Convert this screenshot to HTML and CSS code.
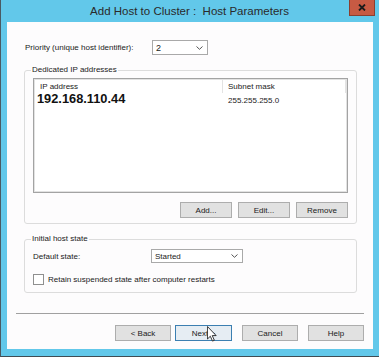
FILE: index.html
```html
<!DOCTYPE html>
<html lang="en">
<head>
    <meta charset="UTF-8">
    <title>Add Host to Cluster : Host Parameters</title>
    <link rel="stylesheet" href="styles.css">
</head>
<body>
    <div class="window">
        <div class="titlebar">
            <span class="title">Add Host to Cluster :&nbsp; Host Parameters</span>
            <button class="close" type="button" aria-label="Close">
                <svg width="8" height="7" viewBox="0 0 8 7"><path d="M1 0.5 L7 6.5 M7 0.5 L1 6.5" stroke="#1b1b1b" stroke-width="1.8" fill="none"/></svg>
            </button>
        </div>

        <div class="client">
            <div class="field-row priority-row">
                <label class="field-label priority-label">Priority (unique host identifier):</label>
                <div class="combo combo-priority">
                    <span>2</span>
                    <svg class="chevron" width="7" height="4" viewBox="0 0 7 4"><path d="M0.5 0.5 L3.5 3.3 L6.5 0.5" stroke="#555" stroke-width="1" fill="none"/></svg>
                </div>
            </div>

            <fieldset class="group group-ips">
                <legend>Dedicated IP addresses</legend>
                <div class="listview">
                    <div class="lv-header">
                        <div class="col col-ip">IP address</div>
                        <div class="col col-mask">Subnet mask</div>
                    </div>
                    <div class="lv-row">
                        <div class="col col-ip ip-value">192.168.110.44</div>
                        <div class="col col-mask">255.255.255.0</div>
                    </div>
                </div>
                <div class="button-row">
                    <button class="btn btn-small" type="button">Add...</button>
                    <button class="btn btn-small" type="button">Edit...</button>
                    <button class="btn btn-small" type="button">Remove</button>
                </div>
            </fieldset>

            <fieldset class="group group-state">
                <legend>Initial host state</legend>
                <div class="field-row state-row">
                    <label class="field-label state-label">Default state:</label>
                    <div class="combo combo-state">
                        <span>Started</span>
                        <svg class="chevron" width="7" height="4" viewBox="0 0 7 4"><path d="M0.5 0.5 L3.5 3.3 L6.5 0.5" stroke="#555" stroke-width="1" fill="none"/></svg>
                    </div>
                </div>
                <label class="check">
                    <span class="check-box"></span>
                    Retain suspended state after computer restarts
                </label>
            </fieldset>

            <hr class="separator">

            <div class="wizard-buttons">
                <button class="btn btn-wizard btn-back" type="button">&lt; Back</button>
                <button class="btn btn-wizard btn-next" type="button">Next &gt;
                    <svg class="cursor" width="10" height="16" viewBox="0 0 12 19"><path d="M0.5 0.5 L0.5 15.5 L4 12.2 L6.6 18 L8.8 17 L6.3 11.4 L11 11.4 Z" fill="#fff" stroke="#111" stroke-width="1"/></svg>
                </button>
                <button class="btn btn-wizard btn-cancel" type="button">Cancel</button>
                <button class="btn btn-wizard btn-help" type="button">Help</button>
            </div>
        </div>
    </div>
</body>
</html>
```

FILE: styles.css
```css
body { margin: 0; font-family: "Liberation Sans", Arial, sans-serif; font-size: 8px; color: #1a1a1a; }
.window { width: 379px; height: 357px; box-sizing: border-box; background: #62c8ea; border-left: 1px solid #4a5a63; border-bottom: 1px solid #3f4c54; display: flex; flex-direction: column; }

/* title bar */
.titlebar { height: 22px; display: grid; grid-template-columns: 1fr auto 1fr; align-items: start; }
.title { grid-column: 2; font-size: 11.5px; line-height: 22px; color: #2a2a2a; white-space: nowrap; margin-left: -1px; }
.close { grid-column: 3; justify-self: end; margin-right: 4px; width: 26px; height: 16px; padding: 0; border: 1px solid #8a3f30; border-top: none; background: #c75a43; display: flex; align-items: center; justify-content: center; }

/* client area */
.client { flex: 1; margin: 0 6px 7px 6px; background: #fdfcfd; display: flex; flex-direction: column; }
.field-row { display: flex; align-items: center; }
.priority-row { margin-top: 18px; padding-left: 18px; height: 15px; }
.priority-label { width: 127px; }
.state-label { width: 118px; }

.combo { box-sizing: border-box; border: 1px solid #a9a9a9; background: #fff; display: flex; align-items: center; justify-content: space-between; padding: 0 4px 0 3px; }
.combo-priority { width: 56px; height: 15px; font-size: 9px; }
.combo-state { width: 92px; height: 14px; }

/* group boxes */
.group { margin: 10px 16px 0 17px; padding: 3px 8px 5px 8px; border: 1px solid #dcdcdc; border-radius: 3px; min-width: 0; }
.group legend { padding: 0 1px; margin-left: -2px; line-height: 10px; }
.group-state { padding: 5px 8px 7px 8px; }

.listview { height: 115px; box-sizing: border-box; border: 1px solid #a3a3a3; box-shadow: inset 0 0 0 1px #e2e2e2; background: #fff; padding: 1px; }
.lv-header { display: flex; height: 13px; align-items: center; }
.lv-header .col-ip { border-right: 1px solid #e3e3e3; }
.lv-header .col-mask { border-right: 1px solid #e3e3e3; }
.col { height: 100%; display: flex; align-items: center; box-sizing: border-box; }
.col-ip { width: 188px; padding-left: 5px; }
.col-mask { flex: 1; padding-left: 5px; }
.lv-row { display: flex; align-items: baseline; height: 13px; }
.lv-row .col { display: block; height: auto; }
.ip-value { font-size: 12.8px; font-weight: bold; color: #111; line-height: 12px; padding-left: 2px; }

.button-row { display: flex; justify-content: flex-end; gap: 6px; margin-top: 9px; }
.btn { font-family: "Liberation Sans", Arial, sans-serif; font-size: 8px; color: #1a1a1a; background: #e1e1e1; border: 1px solid #adadad; padding: 0; height: 16px; }
.btn-small { width: 52px; }

.check { display: flex; align-items: center; margin-top: 11px; height: 11px; }
.check-box { width: 11px; height: 11px; box-sizing: border-box; border: 1px solid #8f8f8f; background: #fff; margin-right: 4px; }

.separator { margin: 20px 9px 0 9px; border: none; border-top: 1px solid #a0a0a0; height: 0; }

.wizard-buttons { display: flex; justify-content: flex-end; margin-top: 11px; padding-right: 9px; }
.btn-wizard { width: 56px; margin-left: 10px; }
.btn-next { position: relative; margin-left: 4px; width: 57px; background: #e6edf3; border-color: #3c7fb1; }
.cursor { position: absolute; left: 31px; top: 0; }
```
